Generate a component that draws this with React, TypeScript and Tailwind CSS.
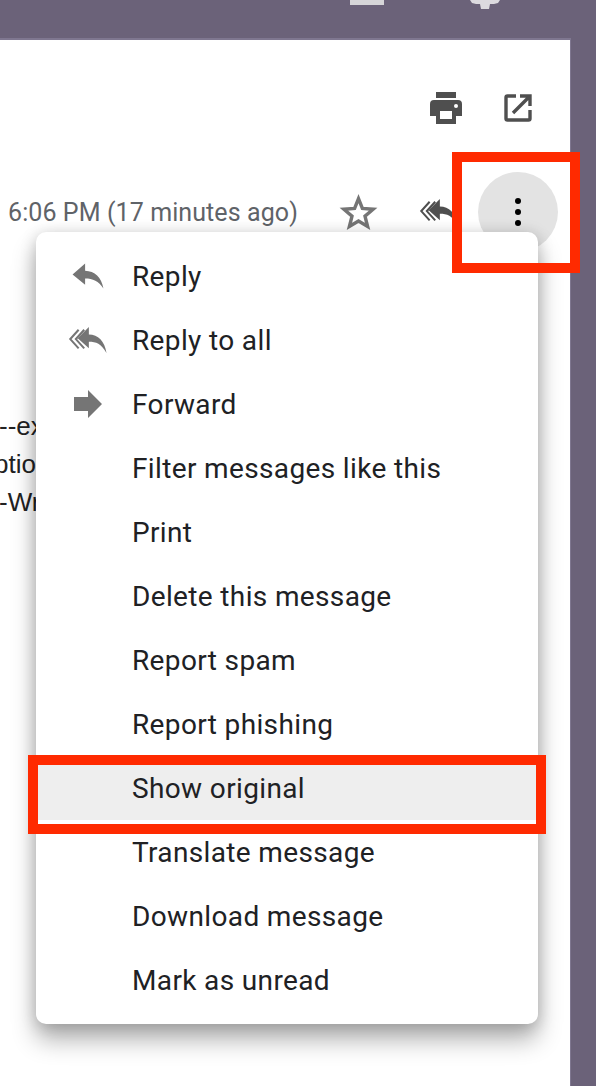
const font = { fontFamily: "Roboto, sans-serif" };
const items = ["Reply","Reply to all","Forward","Filter messages like this","Print","Delete this message","Report spam","Report phishing","Show original","Translate message","Download message","Mark as unread"];

function ReplyIcon() {
  return <svg viewBox="0 0 32 28" className="w-[32px] h-[27px]" fill="#757575"><path d="M13 1 L0 12.5 L13 23 V16.5 C21 16.5 27 19 32 27 C30 15 23 9 13 8.5 Z"/></svg>;
}
function ReplyAll({ color }: { color: string }) {
  return <svg viewBox="0 0 42 28" className="w-[40px] h-[26px]"><path d="M12 3 L3 13 L12 23 M18 3 L9 13 L18 23" fill="none" stroke={color} strokeWidth="2.2"/><path d="M23 0 L11 12 L23 23 V16 C31 16 36 18 42 28 C40 15 33 8 23 8 Z" fill={color}/></svg>;
}
function Icon({ i }: { i: number }) {
  if (i === 0) return <ReplyIcon />;
  if (i === 1) return <ReplyAll color="#757575" />;
  if (i === 2) return <svg viewBox="0 0 28 28" className="w-[28px] h-[28px]" fill="#757575"><path d="M0 7 H14 V0 L28 14 L14 28 V21 H0 Z"/></svg>;
  return null;
}

export default function App() {
  return (
    <div style={font} className="relative w-[596px] h-[1086px] bg-[#6b6279] overflow-hidden">
      <div className="h-[38px] flex justify-end items-start">
        <div className="w-[34px] h-[5px] bg-[#d6d5d8] mr-[86px]" />
        <svg viewBox="0 0 30 10" className="w-[30px] h-[10px] mr-[96px]" fill="#dcdadf"><path d="M0 0 H30 L28 3 L24 4 L20 4 L19 9 H11 L10 4 L6 4 L2 3 Z"/></svg>
      </div>
      <div className="w-[571px] border-r border-[#7f7790] h-[1048px]">
        <div className="w-[570px] h-[1048px] bg-white border-t-2 border-[#7f7790] flex flex-col">
          <div className="flex justify-end items-center gap-[42px] pt-[52px] pr-[38px]">
            <svg viewBox="0 0 32 32" className="w-[32px] h-[32px]" fill="#4f4f4f"><path d="M6 0 H26 V6 H6 Z M4 8 H28 A4 4 0 0 1 32 12 V24 H26 V32 H6 V24 H0 V12 A4 4 0 0 1 4 8 Z M10 19 V27 H22 V19 Z"/><circle cx="26" cy="14" r="2" fill="#fff"/></svg>
            <svg viewBox="0 0 28 28" className="w-[28px] h-[28px]" fill="none" stroke="#4f4f4f" strokeWidth="3.4"><path d="M12 2 H3.5 A1.5 1.5 0 0 0 2 3.5 V24.5 A1.5 1.5 0 0 0 3.5 26 H24.5 A1.5 1.5 0 0 0 26 24.5 V16"/><path d="M9 19 L26 2 M16 2 H26 V12" /></svg>
          </div>
          <div className="flex items-center h-[80px] mt-[48px] pl-[8px]">
            <span className="w-[289px] text-[25px] tracking-[0.09px] text-[#5f6368] leading-none whitespace-nowrap">6:06 PM (17 minutes ago)</span>
            <svg viewBox="0 0 24 24" className="ml-[42px] w-[39px] h-[39px] shrink-0" fill="none" stroke="#757575" strokeWidth="2.1"><path d="M12 3.5 L14.4 9.5 L21 10 L16 14.2 L17.6 20.6 L12 17.2 L6.4 20.6 L8 14.2 L3 10 L9.6 9.5 Z"/></svg>
            <div className="ml-[40px] w-[40px] h-[26px] shrink-0"><ReplyAll color="#4f4f4f" /></div>
            <div className="ml-[20px] w-[80px] h-[80px] rounded-full bg-[#e3e3e3] shrink-0 flex flex-col items-center justify-center gap-[5px]">
              <i className="w-[6px] h-[6px] rounded-full bg-black" /><i className="w-[6px] h-[6px] rounded-full bg-black" /><i className="w-[6px] h-[6px] rounded-full bg-black" />
            </div>
          </div>
          <div className="pt-[155px] text-[26px] leading-[38px] text-[#222]" style={{ fontFamily: '"Liberation Sans", sans-serif' }}>
            <div className="-ml-[1px]">--ex</div><div className="-ml-[6px]">ptio</div><div className="-ml-[1px]">-Wr</div>
          </div>
        </div>
      </div>

      <div className="absolute left-[36px] top-[232px] w-[502px] h-[792px] bg-white rounded-[10px] py-[12px] shadow-[0_16px_24px_rgba(0,0,0,0.3),0_2px_16px_rgba(0,0,0,0.18)]">
        {items.map((t, i) => (
          <div key={t} className={`relative h-[64px] flex items-center pl-[96px] pt-[1px] text-[28px] tracking-[0.36px] text-[#202124] ${t === "Show original" ? "bg-[#eeeeee]" : ""}`}>
            <div className={`absolute top-1/2 -translate-y-1/2 ${i === 1 ? "left-[31px]" : i === 0 ? "left-[36px]" : "left-[38px]"}`}><Icon i={i} /></div>
            {t}
          </div>
        ))}
      </div>

      <div className="absolute left-[452px] top-[152px] w-[128px] h-[121px] border-[10px] border-[#ff2a00]" />
      <div className="absolute left-[28px] top-[755px] w-[518px] h-[79px] border-[10px] border-[#ff2a00]" />
    </div>
  );
}
